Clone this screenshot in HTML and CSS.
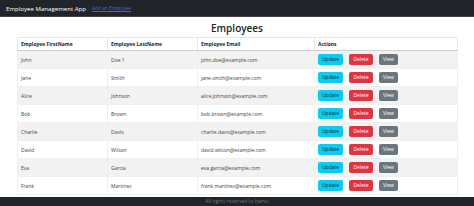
FILE: index.html
```html
<!DOCTYPE html>
<html lang="en">

<head>
    <meta charset="UTF-8">
    <title>Employee Management App</title>
    <link rel="stylesheet" href="styles.css">
</head>

<body>
    <nav class="navbar">
        <span class="brand">Employee Management App</span>
        <a href="#" class="nav-link">Add an Employee</a>
    </nav>

    <main class="container">
        <h2 class="title">Employees</h2>
        <table class="table">
            <thead>
                <tr>
                    <th>Employee FirstName</th>
                    <th>Employee LastName</th>
                    <th>Employee Email</th>
                    <th>Actions</th>
                </tr>
            </thead>
            <tbody>
                <tr><td>John</td><td>Doe 1</td><td>john.doe@example.com</td><td><div class="actions"><button class="btn btn-info">Update</button><button class="btn btn-danger">Delete</button><button class="btn btn-secondary">View</button></div></td></tr>
                <tr><td>Jane</td><td>Smith</td><td>jane.smith@example.com</td><td><div class="actions"><button class="btn btn-info">Update</button><button class="btn btn-danger">Delete</button><button class="btn btn-secondary">View</button></div></td></tr>
                <tr><td>Alice</td><td>Johnson</td><td>alice.johnson@example.com</td><td><div class="actions"><button class="btn btn-info">Update</button><button class="btn btn-danger">Delete</button><button class="btn btn-secondary">View</button></div></td></tr>
                <tr><td>Bob</td><td>Brown</td><td>bob.brown@example.com</td><td><div class="actions"><button class="btn btn-info">Update</button><button class="btn btn-danger">Delete</button><button class="btn btn-secondary">View</button></div></td></tr>
                <tr><td>Charlie</td><td>Davis</td><td>charlie.davis@example.com</td><td><div class="actions"><button class="btn btn-info">Update</button><button class="btn btn-danger">Delete</button><button class="btn btn-secondary">View</button></div></td></tr>
                <tr><td>David</td><td>Wilson</td><td>david.wilson@example.com</td><td><div class="actions"><button class="btn btn-info">Update</button><button class="btn btn-danger">Delete</button><button class="btn btn-secondary">View</button></div></td></tr>
                <tr><td>Eva</td><td>Garcia</td><td>eva.garcia@example.com</td><td><div class="actions"><button class="btn btn-info">Update</button><button class="btn btn-danger">Delete</button><button class="btn btn-secondary">View</button></div></td></tr>
                <tr><td>Frank</td><td>Martinez</td><td>frank.martinez@example.com</td><td><div class="actions"><button class="btn btn-info">Update</button><button class="btn btn-danger">Delete</button><button class="btn btn-secondary">View</button></div></td></tr>
            </tbody>
        </table>
    </main>

    <footer class="footer">All rights reserved to hamiz</footer>
</body>
</html>
```

FILE: styles.css
```css
body {
    margin: 0;
    font-family: 'Open Sans', 'Noto Sans', sans-serif;
    color: #212529;
    background-color: #fff;
}

.navbar {
    display: flex;
    align-items: center;
    height: 17px;
    padding: 0 6px;
    background-color: #212529;
    border-bottom: 1px solid #444;
    box-sizing: border-box;
}

.brand {
    color: #fff;
    font-size: 6.1px;
    margin-right: 6px;
}

.nav-link {
    color: #2f6fe0;
    font-size: 4.8px;
    text-decoration: underline;
}

.container {
    width: 440px;
    margin: 0 auto;
    height: 180px;
}

.title {
    margin: 0;
    height: 20px;
    padding-top: 2px;
    box-sizing: border-box;
    font-size: 10px;
    font-weight: 600;
    text-align: center;
    line-height: 18px;
}

.table {
    width: 440px;
    border-collapse: collapse;
    font-size: 5px;
    table-layout: fixed;
}

.table th:nth-child(1), .table th:nth-child(2) { width: 90px; }
.table th:nth-child(3) { width: 117px; }
.table th:nth-child(4) { width: 143px; }

.table th, .table td {
    border: 1px solid #e6e6e6;
    padding: 0 3px;
    text-align: left;
    vertical-align: middle;
    white-space: nowrap;
    overflow: hidden;
    box-sizing: border-box;
}

.table th {
    height: 13px;
    font-weight: 700;
    border-bottom-color: #cfcfcf;
}

.table td {
    height: 18px;
    color: #444;
    border-color: #f0f0f0;
}

.table tbody tr:nth-child(odd) {
    background-color: #f2f2f2;
}

.actions {
    display: flex;
    align-items: center;
    gap: 6px;
}

.btn {
    border: none;
    border-radius: 2px;
    height: 11px;
    padding: 0;
    font-family: inherit;
    font-size: 5px;
    line-height: 11px;
    text-align: center;
}

.btn-info {
    background-color: #0dcaf0;
    color: #222;
    width: 25px;
}

.btn-danger {
    background-color: #dc3545;
    color: #fff;
    width: 24px;
}

.btn-secondary {
    background-color: #6c757d;
    color: #fff;
    width: 19px;
}

.footer {
    height: 9px;
    background-color: #212529;
    color: #6c757d;
    font-size: 5px;
    line-height: 9px;
    text-align: center;
}
```
